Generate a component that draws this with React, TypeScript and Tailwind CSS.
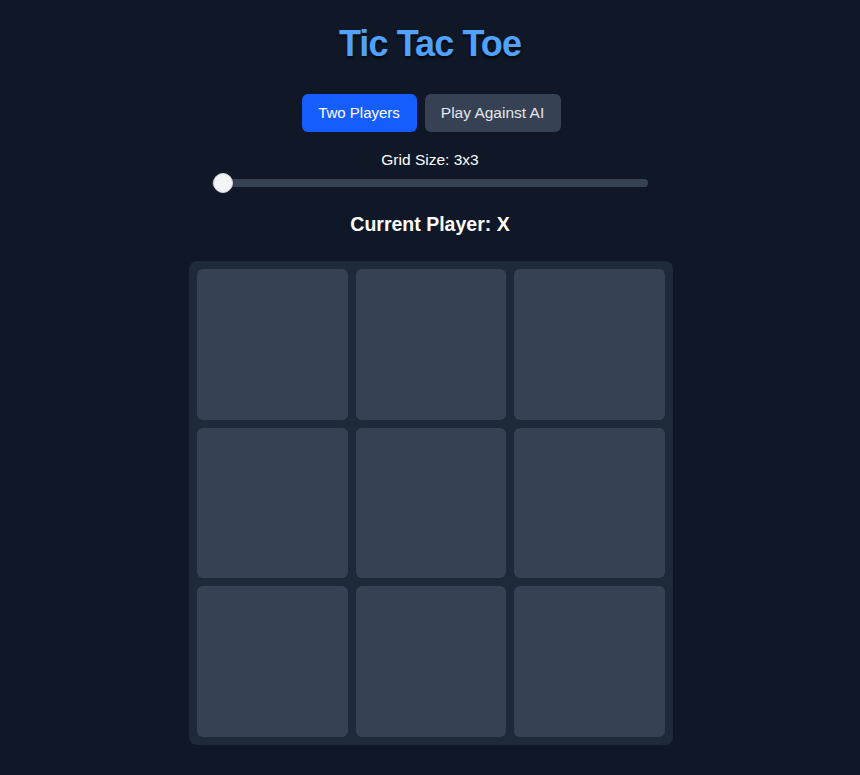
import React, { useState } from "react";

export default function App() {
  const [cells] = useState<string[]>(Array(9).fill(""));
  return (
    <div
      className="min-h-screen w-full bg-gray-900 flex flex-col items-center pt-6 text-white"
      style={{ fontFamily: '"Liberation Sans", Arial, sans-serif' }}
    >
      <h1 className="text-4xl leading-10 font-bold tracking-tight text-blue-400 [text-shadow:0_2px_3px_rgba(0,0,0,0.8)]">
        Tic Tac Toe
      </h1>
      <div className="mt-[30px] flex gap-2 pl-[2px]">
        <button className="h-[38px] w-[115px] rounded-md bg-blue-600 text-white text-[15px]">
          Two Players
        </button>
        <button className="h-[38px] w-[136px] rounded-md bg-gray-700 text-gray-200 text-[15.5px]">
          Play Against AI
        </button>
      </div>
      <div className="mt-[18px] text-[15.5px] leading-5 text-white">Grid Size: 3x3</div>
      <div className="mt-[3px] h-5 w-[436px] flex items-center relative">
        <div className="h-2 w-full rounded-full bg-gray-700" />
        <div className="absolute left-[1px] top-0 h-5 w-5 rounded-full bg-gray-100 border border-gray-300" />
      </div>
      <div className="mt-[17px] text-[19.5px] leading-7 font-bold text-white">Current Player: X</div>
      <div className="mt-[23px] w-[484px] h-[484px] p-2 bg-gray-800 rounded-lg grid grid-cols-3 grid-rows-3 gap-2 translate-x-[1px]">
        {cells.map((c, i) => (
          <button key={i} className="bg-gray-700 rounded-md text-5xl font-bold">
            {c}
          </button>
        ))}
      </div>
    </div>
  );
}
